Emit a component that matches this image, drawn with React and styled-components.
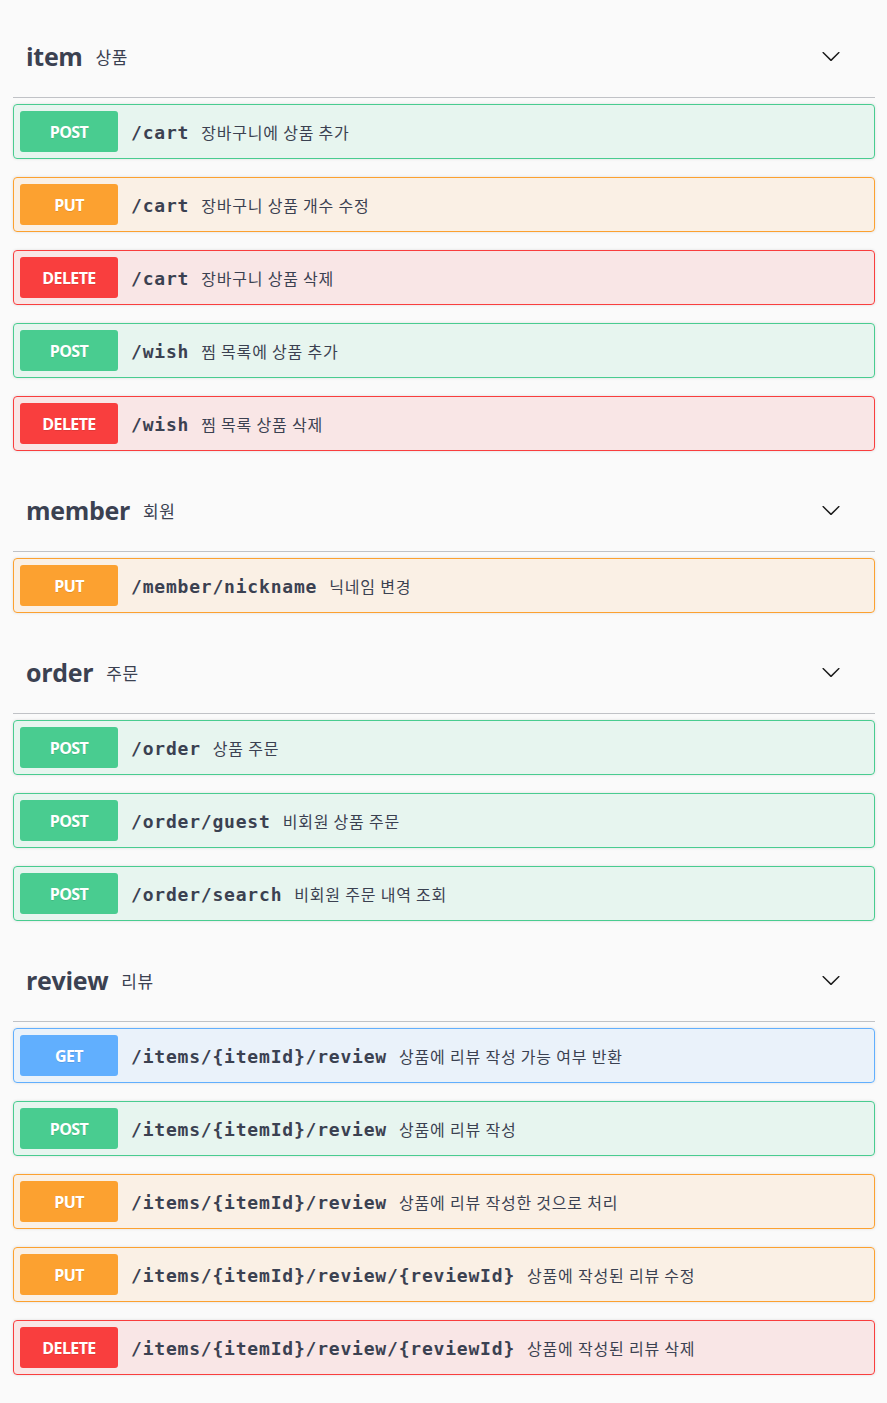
import React from "react";
import styled, { createGlobalStyle } from "styled-components";

const GlobalStyle = createGlobalStyle`
  html, body {
    margin: 0;
    padding: 0;
    background: #fafafa;
  }
  body {
    font-family: "Open Sans", "Noto Sans CJK KR", sans-serif;
    color: #3b4151;
  }
`;

const METHODS = {
  GET: "97,175,254",
  POST: "73,204,144",
  PUT: "252,161,48",
  DELETE: "249,62,62",
};

const sections = [
  {
    name: "item",
    desc: "상품",
    ops: [
      ["POST", "/cart", "장바구니에 상품 추가"],
      ["PUT", "/cart", "장바구니 상품 개수 수정"],
      ["DELETE", "/cart", "장바구니 상품 삭제"],
      ["POST", "/wish", "찜 목록에 상품 추가"],
      ["DELETE", "/wish", "찜 목록 상품 삭제"],
    ],
  },
  {
    name: "member",
    desc: "회원",
    ops: [["PUT", "/member/nickname", "닉네임 변경"]],
  },
  {
    name: "order",
    desc: "주문",
    ops: [
      ["POST", "/order", "상품 주문"],
      ["POST", "/order/guest", "비회원 상품 주문"],
      ["POST", "/order/search", "비회원 주문 내역 조회"],
    ],
  },
  {
    name: "review",
    desc: "리뷰",
    ops: [
      ["GET", "/items/{itemId}/review", "상품에 리뷰 작성 가능 여부 반환"],
      ["POST", "/items/{itemId}/review", "상품에 리뷰 작성"],
      ["PUT", "/items/{itemId}/review", "상품에 리뷰 작성한 것으로 처리"],
      ["PUT", "/items/{itemId}/review/{reviewId}", "상품에 작성된 리뷰 수정"],
      ["DELETE", "/items/{itemId}/review/{reviewId}", "상품에 작성된 리뷰 삭제"],
    ],
  },
];

const Page = styled.div`
  padding: 15px 12px 28px 13px;
`;

const TagSection = styled.section``;

const TagHeader = styled.div`
  display: flex;
  align-items: center;
  height: 82px;
  padding: 0 34px 0 13px;
  border-bottom: 1px solid rgba(59, 65, 81, 0.3);
  margin-bottom: 6px;
`;

const TagName = styled.h3`
  margin: 0;
  font-family: "Open Sans", sans-serif;
  font-size: 25px;
  font-weight: 700;
  color: #3b4151;
  letter-spacing: -0.3px;
`;

const TagDesc = styled.small`
  margin-left: 13px;
  flex: 1;
  font-family: "Noto Sans CJK KR", sans-serif;
  font-size: 17px;
  letter-spacing: 0.6px;
  color: #3b4151;
`;

const Arrow = styled.svg`
  width: 20px;
  height: 20px;
  fill: #1a1a1a;
`;

const OpBlock = styled.div`
  display: flex;
  align-items: center;
  height: 53px;
  padding: 0 6px;
  margin-bottom: 18px;
  border: 1px solid rgb(${(p) => p.$rgb});
  border-radius: 4px;
  background: rgba(${(p) => p.$rgb}, 0.1);
  box-shadow: 0 0 3px rgba(0, 0, 0, 0.12);
`;

const Badge = styled.span`
  display: flex;
  align-items: center;
  justify-content: center;
  width: 98px;
  height: 41px;
  flex-shrink: 0;
  border-radius: 3px;
  background: rgb(${(p) => p.$rgb});
  color: #fff;
  font-family: "Open Sans", sans-serif;
  font-size: 16px;
  font-weight: 700;
  letter-spacing: -0.6px;
  text-shadow: 0 1px 0 rgba(0, 0, 0, 0.1);
`;

const Path = styled.span`
  padding: 1px 12px 0 13px;
  font-family: "DejaVu Sans Mono", "Liberation Mono", monospace;
  font-size: 18px;
  font-weight: 700;
  letter-spacing: 0.8px;
  color: #3b4151;
`;

const Desc = styled.span`
  font-family: "Noto Sans CJK KR", sans-serif;
  font-size: 16px;
  letter-spacing: 0.8px;
  color: #3b4151;
`;

const ChevronDown = () => (
  <Arrow viewBox="0 0 20 20">
    <path d="M17.418 6.109c.272-.268.709-.268.979 0s.271.701 0 .969l-7.908 7.83c-.27.268-.707.268-.979 0l-7.908-7.83c-.27-.268-.27-.701 0-.969.271-.268.709-.268.979 0L10 13.25l7.418-7.141z" />
  </Arrow>
);

const App = () => (
  <>
    <GlobalStyle />
    <Page>
      {sections.map((sec) => (
        <TagSection key={sec.name}>
          <TagHeader>
            <TagName>{sec.name}</TagName>
            <TagDesc>{sec.desc}</TagDesc>
            <ChevronDown />
          </TagHeader>
          {sec.ops.map(([method, path, desc], i) => (
            <OpBlock key={i} $rgb={METHODS[method]}>
              <Badge $rgb={METHODS[method]}>{method}</Badge>
              <Path>{path}</Path>
              <Desc>{desc}</Desc>
            </OpBlock>
          ))}
        </TagSection>
      ))}
    </Page>
  </>
);

export default App;
